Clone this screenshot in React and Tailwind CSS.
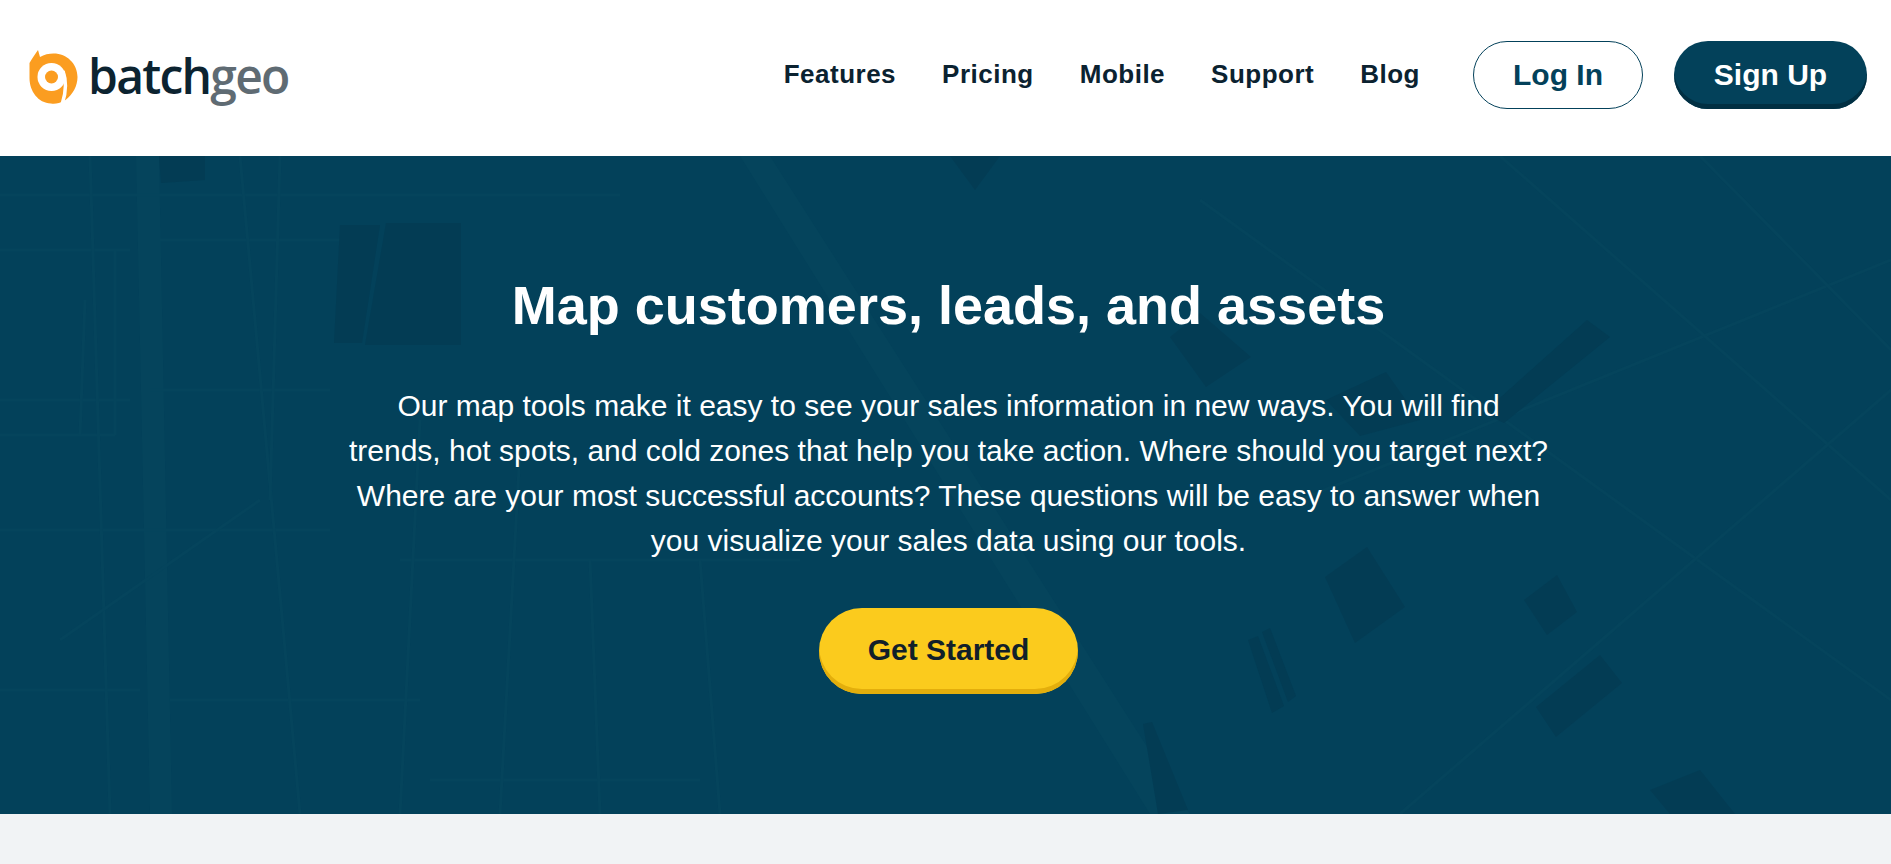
const Logo = () => (
  <div className="flex items-center">
    <svg width="50" height="56" viewBox="0 0 50 56" className="shrink-0">
      <path d="M9 0 L11 7 C15 4.500 20 3.500 24.500 3.500 C38 3.500 48.500 14 48.500 27 C48.500 36 44 44 36.500 50 C30 54 25 54 22 53.500 C9 53 0.500 41 0.500 28 L0.500 13 C3 9 6 4 9 0 Z" fill="#fb9d20" />
      <circle cx="22.500" cy="27" r="14" fill="#ffffff" />
      <circle cx="22.500" cy="27" r="6.500" fill="#fb9d20" />
      <path d="M34 21 C38 32 37 42 33.500 53" stroke="#ffffff" strokeWidth="3.500" fill="none" />
    </svg>
    <span className="ml-[9px] text-[48px] leading-none font-[550] tracking-[-1.75px] text-[#0c2330] font-['Open_Sans',sans-serif] pb-[4px]">
      batch<span className="text-[#5f6b73]">geo</span>
    </span>
  </div>
);

const MapPattern = () => {
  const dark = [
    "159,156 205,156 205,180 161,183",
    "340,225 380,225 362,343 334,343",
    "386,223 461,223 461,345 365,345",
    "1587,320 1610,337 1504,423 1483,413",
    "1367,547 1405,607 1355,643 1325,577",
    "1557,575 1577,612 1547,635 1524,600",
    "1600,655 1622,683 1556,737 1536,707",
    "1248,640 1258,636 1284,706 1272,713",
    "1262,632 1270,628 1296,696 1288,702",
    "1143,724 1152,722 1188,810 1158,814",
    "1170,337 1200,313 1251,357 1206,387",
    "1326,400 1386,372 1420,420 1360,436",
    "950,156 1000,156 975,190",
    "1650,790 1700,770 1735,814 1670,814",
  ];
  const light = [
    "M136 156 L159 156 L172 814 L150 814 Z",
    "M740 156 L770 156 L1190 814 L1150 814 Z",
  ];
  const lines = [
    "M0 195 H620", "M0 250 H130", "M160 240 H340", "M0 400 H130", "M0 435 H115", "M150 390 H330",
    "M0 530 H330", "M0 690 H140", "M170 700 H420", "M400 560 H800", "M430 780 H700", "M90 156 L110 814",
    "M85 300 L80 435", "M115 250 L115 435", "M240 156 L300 814", "M280 156 L270 500", "M420 420 L400 814",
    "M520 450 L500 814", "M590 560 L600 814", "M700 560 L720 814", "M1300 500 L1891 260", "M1200 200 L1891 700",
    "M1500 156 L1891 500", "M1400 814 L1891 390", "M1700 156 L1891 350", "M60 640 L260 500",
  ];
  return (
    <svg className="absolute inset-0 w-full h-full" viewBox="0 156 1891 658" preserveAspectRatio="none">
      {light.map((d) => <path key={d} d={d} fill="#05445c" />)}
      {lines.map((d) => <path key={d} d={d} stroke="#05445c" strokeWidth="3" fill="none" />)}
      {dark.map((p) => <polygon key={p} points={p} fill="#033c54" />)}
    </svg>
  );
};

export default function App() {
  const links = ["Features", "Pricing", "Mobile", "Support", "Blog"];
  return (
    <div className="min-h-[864px] bg-[#f1f3f5] font-['Liberation_Sans',Arial,sans-serif]">
      <header className="h-[156px] bg-white flex items-center justify-between pl-[29px] pr-[24px]">
        <Logo />
        <div className="flex items-center pb-[6px]">
          <nav className="flex items-center gap-[46px] text-[26px] font-bold tracking-[0.5px] text-[#0b2230] pb-[2px]">
            {links.map((l) => <a key={l}>{l}</a>)}
          </nav>
          <a className="ml-[53px] w-[170px] h-[68px] flex items-center justify-center rounded-full border border-[#03415a] pb-[2px] text-[30px] font-bold text-[#03415a]">
            Log In
          </a>
          <a className="ml-[31px] w-[193px] h-[68px] flex items-center justify-center rounded-full bg-[#03415a] shadow-[inset_0_-5px_0_#012f42] pb-[2px] text-[30px] font-bold text-white">
            Sign Up
          </a>
        </div>
      </header>
      <section className="relative h-[658px] bg-[#03415a] overflow-hidden">
        <MapPattern />
        <div className="relative flex flex-col items-center pl-[6px] text-white">
          <h1 className="mt-[118px] text-[54px] leading-[62px] font-bold">Map customers, leads, and assets</h1>
          <p className="mt-[47px] w-[1300px] text-center text-[30px] leading-[45px]">
            Our map tools make it easy to see your sales information in new ways. You will find<br />
            trends, hot spots, and cold zones that help you take action. Where should you target next?<br />
            Where are your most successful accounts? These questions will be easy to answer when<br />
            you visualize your sales data using our tools.
          </p>
          <a className="mt-[45px] w-[259px] h-[86px] flex items-center justify-center rounded-full bg-[#fbcb1d] shadow-[inset_0_-5px_0_#e3ae0c] pb-[3px] text-[30px] font-bold text-[#11202a]">
            Get Started
          </a>
        </div>
      </section>
    </div>
  );
}
